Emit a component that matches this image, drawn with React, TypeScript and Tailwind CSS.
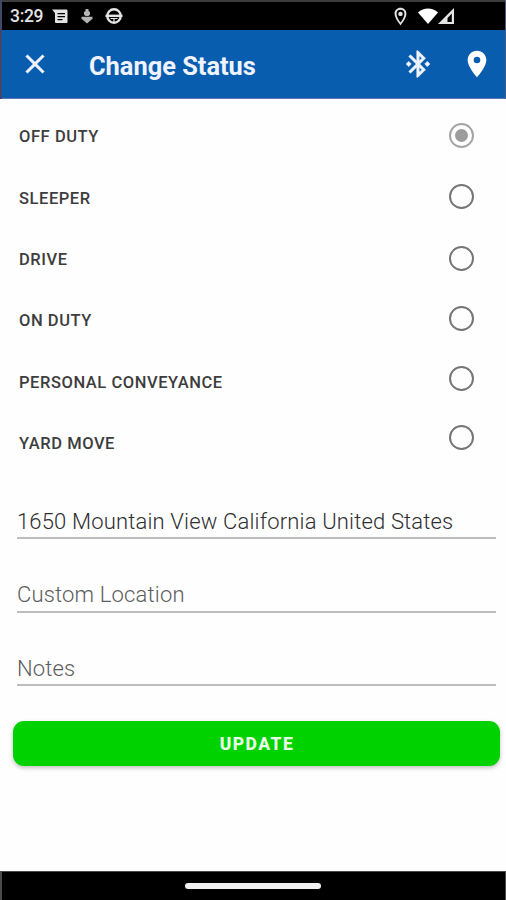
import { useState } from 'react';

const statuses = [
  { name: 'OFF DUTY', height: 'h-[61.5px]' },
  { name: 'SLEEPER', height: 'h-[61.5px]' },
  { name: 'DRIVE', height: 'h-[61.5px]' },
  { name: 'ON DUTY', height: 'h-[59.5px]' },
  { name: 'PERSONAL CONVEYANCE', height: 'h-[59px]' },
  { name: 'YARD MOVE', height: 'h-[60px]' },
];

const fields = [
  { id: 'location', placeholder: 'Location', initial: '1650 Mountain View California United States' },
  { id: 'custom', placeholder: 'Custom Location', initial: '' },
  { id: 'notes', placeholder: 'Notes', initial: '' },
];

function StatusBar() {
  return (
    <div className="flex h-[30px] items-center border-t-2 border-[#3c3c3c] bg-black pl-2 text-[#e4e4e4]">
      <span className="w-[42px] text-[17.5px] font-medium tracking-[-0.3px]">3:29</span>
      {/* Messages */}
      <svg className="h-[15px] w-4" viewBox="0 0 16 15" fill="currentColor">
        <path fillRule="evenodd" d="M0 0.5h14.5a1 1 0 0 1 1 1v11.5a1 1 0 0 1-1 1H4a1 1 0 0 1-1-1V4zM5.500 4v1.300h7.500V4zM5.500 7v1.300h7.500V7zM5.500 10v1.300h5V10z" />
      </svg>
      {/* Download */}
      <svg className="ml-[13px] h-4 w-3" viewBox="0 0 12 16" fill="#b4b4b4">
        <path d="M4.500 1h3v2l1.500 1v2.500L7.500 8h-3L3 6.500V4l1.500-1z" />
        <path d="M0.500 8.800h11v2L6 15.500 0.500 10.800z" />
      </svg>
      {/* Driving service */}
      <svg className="ml-[12px] h-[18px] w-[18px]" viewBox="0 0 18 18" fill="none" stroke="currentColor">
        <circle cx="9" cy="9" r="6.700" strokeWidth="2.400" />
        <path d="M0.500 8.800h17" strokeWidth="2.400" />
        <path d="M9 11.300v4M5.500 11.500h7" strokeWidth="1.200" />
      </svg>
      <svg className="ml-[268px] h-[19px] w-[19px]" viewBox="0 0 24 24" fill="currentColor">
        <path d="M12 1C7.900 1 4.500 4.300 4.500 8.500 4.500 14.500 12 23 12 23s7.500-8.500 7.500-14.500C19.500 4.300 16.100 1 12 1zm0 18.500c-2.500-3-5-7.500-5-11a5 5 0 0 1 10 0c0 3.500-2.500 8-5 11z" />
        <circle cx="12" cy="8.700" r="2.800" />
      </svg>
      <svg className="ml-[8px] h-4 w-5" viewBox="0 0 20 16" fill="#fff">
        <path d="M0 4.500C5.500-0.700 14.500-0.700 20 4.500L10 16z" />
      </svg>
      <svg className="h-4 w-4" viewBox="0 0 16 16" fill="currentColor">
        <path fillRule="evenodd" d="M16 0v16H0zM13.800 5.500L9.500 10v4h4.300z" />
      </svg>
    </div>
  );
}

function AppHeader() {
  return (
    <header className="flex h-[69px] items-center border-b border-[#5f78b4] bg-[#095dae] text-[#f0f3ff]">
      <button aria-label="Close" className="ml-[17px]">
        <svg className="h-[32px] w-[32px]" viewBox="0 0 24 24" fill="currentColor" stroke="currentColor" strokeWidth="0.300">
          <path d="M19 6.410L17.590 5 12 10.590 6.410 5 5 6.410 10.590 12 5 17.590 6.410 19 12 13.410 17.590 19 19 17.590 13.410 12z" />
        </svg>
      </button>
      <h1 className="ml-[38px] flex-1 pt-1 text-[25.4px] font-bold">Change Status</h1>
      <svg className="h-[32px] w-[32px]" viewBox="0 0 24 24" fill="currentColor" stroke="currentColor" strokeWidth="0.300">
        <path d="M7 12l-2-2-2 2 2 2 2-2zm10.710-4.290L12 2h-1v7.590L6.410 5 5 6.410 10.590 12 5 17.590 6.410 19 11 14.410V22h1l5.710-5.710-4.300-4.290 4.300-4.290zM13 5.830l1.880 1.880L13 9.590V5.830zm1.880 10.460L13 18.170v-3.760l1.880 1.880zM19 10l-2 2 2 2 2-2-2-2z" />
      </svg>
      <svg className="mr-3 ml-[27px] h-[32px] w-[32px]" viewBox="0 0 24 24" fill="#fff">
        <path d="M12 2C8.130 2 5 5.130 5 9c0 5.250 7 13 7 13s7-7.750 7-13c0-3.870-3.130-7-7-7zm0 9.500a2.500 2.500 0 0 1 0-5 2.500 2.500 0 0 1 0 5z" />
      </svg>
    </header>
  );
}

export default function App() {
  const [selected, setSelected] = useState('OFF DUTY');
  const [values, setValues] = useState(fields.map((f) => f.initial));

  return (
    <div className="flex h-[900px] w-[506px] flex-col bg-[#fefefe] font-['Roboto',sans-serif]">
      <div className="border-r border-l-2 border-r-[#4a5a80] border-l-[#41476b]">
        <StatusBar />
        <AppHeader />
      </div>

      <main className="flex-1">
        <div className="flex h-[376px] justify-between pr-8 pl-[19px]">
          <div className="flex flex-col pt-2">
            {statuses.map((s) => (
              <label
                key={s.name}
                htmlFor={s.name}
                className="flex h-[61.4px] items-center text-[16.5px] font-medium tracking-[0.56px] text-[#3d3d3d]"
              >
                {s.name}
              </label>
            ))}
          </div>
          <div className="flex flex-col pt-[5.5px]">
            {statuses.map((s) => (
              <button
                key={s.name}
                id={s.name}
                role="radio"
                aria-checked={selected === s.name}
                onClick={() => setSelected(s.name)}
                className={`flex items-center ${s.height}`}
              >
                <span
                  className={`flex h-[25px] w-[25px] items-center justify-center rounded-full border-2 ${
                    selected === s.name ? 'border-[#a4a4a4]' : 'border-[#757575]'
                  }`}
                >
                  {selected === s.name && <span className="h-[13px] w-[13px] rounded-full bg-[#9c9c9c]" />}
                </span>
              </button>
            ))}
          </div>
        </div>

        <div className="flex flex-col gap-[33.5px] pt-[24px] pr-[10px] pl-[17px]">
          {fields.map((f, i) => (
            <input
              key={f.id}
              value={values[i]}
              placeholder={f.placeholder}
              onChange={(e) => setValues(values.map((v, j) => (j === i ? e.target.value : v)))}
              className="h-10 border-b-2 border-[#bdbdbd] pt-[6px] text-[22px] font-light tracking-[0.17px] text-[#2f2f2f] outline-none placeholder:text-[#5c5c5c]"
            />
          ))}
        </div>

        <div className="pt-[35px] pr-[6px] pl-[13px]">
          <button className="h-[45px] w-full rounded-[11px] bg-[#00d200] pt-0.5 pl-px text-[17.5px] font-extrabold tracking-[1.5px] text-[#eaffea] shadow-[0_2px_4px_rgba(0,0,0,0.25)]">
            UPDATE
          </button>
        </div>
      </main>

      <footer className="flex h-[29px] items-center justify-center border-t border-r border-l-2 border-[#4a4a4a] bg-black">
        <div className="mr-px h-[6px] w-[136px] rounded-full bg-[#f0f0f0]" />
      </footer>
    </div>
  );
}
